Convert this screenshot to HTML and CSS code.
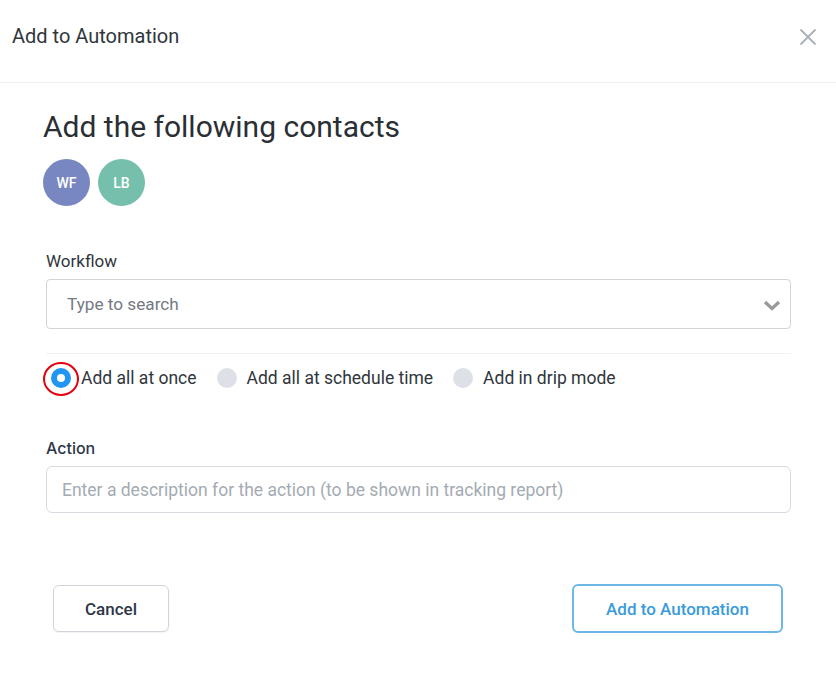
FILE: index.html
```html
<!DOCTYPE html>
<html lang="en">
<head>
    <meta charset="UTF-8">
    <meta name="viewport" content="width=device-width, initial-scale=1.0">
    <title>Add to Automation</title>
    <link rel="stylesheet" href="styles.css">
</head>
<body>
    <div class="modal">
        <div class="modal-header">
            <span class="modal-title">Add to Automation</span>
            <button class="close-button" aria-label="Close">
                <svg width="18" height="18" viewBox="0 0 18 18">
                    <path d="M1.5 1.5 L16.5 16.5 M16.5 1.5 L1.5 16.5" stroke="#a9b0b6" stroke-width="1.8" fill="none"/>
                </svg>
            </button>
        </div>

        <div class="modal-body">
            <h2 class="contacts-title">Add the following contacts</h2>
            <div class="avatars">
                <div class="avatar avatar-wf">WF</div>
                <div class="avatar avatar-lb">LB</div>
            </div>

            <label class="field-label">Workflow</label>
            <div class="select-box">
                <span class="select-placeholder">Type to search</span>
                <svg class="chevron" width="18" height="11" viewBox="0 0 18 11">
                    <path d="M2 2 L9 8.5 L16 2" stroke="#9a9a9a" stroke-width="3.2" fill="none"/>
                </svg>
            </div>

            <div class="divider"></div>

            <div class="radio-row">
                <label class="radio-option">
                    <span class="radio radio-checked"></span>
                    <span class="highlight"></span>
                    <span class="radio-text">Add all at once</span>
                </label>
                <label class="radio-option">
                    <span class="radio"></span>
                    <span class="radio-text">Add all at schedule time</span>
                </label>
                <label class="radio-option">
                    <span class="radio"></span>
                    <span class="radio-text">Add in drip mode</span>
                </label>
            </div>

            <label class="field-label action-label">Action</label>
            <input class="text-input" type="text" placeholder="Enter a description for the action (to be shown in tracking report)">
        </div>

        <div class="modal-footer">
            <button class="btn btn-cancel">Cancel</button>
            <button class="btn btn-primary">Add to Automation</button>
        </div>
    </div>
</body>
</html>
```

FILE: styles.css
```css
body {
    margin: 0;
    background-color: #fff;
    font-family: Roboto, "Liberation Sans", sans-serif;
    color: #2f353b;
}
.modal {
    width: 836px;
}
.modal-header {
    display: flex;
    align-items: flex-start;
    justify-content: space-between;
    height: 83px;
    box-sizing: border-box;
    padding: 25px 19px 0 12px;
    border-bottom: 1px solid #eef2f6;
}
.modal-title {
    font-size: 20px;
    line-height: 22px;
    color: #30363c;
}
.close-button {
    background: none;
    border: none;
    padding: 0;
    width: 18px;
    height: 18px;
    margin-top: 3px;
    cursor: pointer;
}
.modal-body {
    padding: 27px 45px 0 46px;
}
.contacts-title {
    font-size: 30px;
    font-weight: 400;
    line-height: 34px;
    margin: 0 0 15px -3px;
    color: #2a2f35;
}
.avatars {
    display: flex;
    gap: 8px;
    margin-left: -3px;
}
.avatar {
    width: 47px;
    height: 47px;
    border-radius: 50%;
    display: flex;
    align-items: center;
    justify-content: center;
    color: #fff;
    font-size: 14px;
    font-weight: 500;
}
.avatar-wf {
    background-color: #7887c1;
}
.avatar-lb {
    background-color: #75bfac;
}
.field-label {
    display: block;
    font-size: 17px;
    line-height: 20px;
    margin: 45px 0 8px;
    color: #30363c;
}
.select-box {
    display: flex;
    align-items: center;
    justify-content: space-between;
    height: 48px;
    padding: 0 9px 0 20px;
    border: 1px solid #d2d4d8;
    border-radius: 4px;
}
.select-placeholder {
    font-size: 17.2px;
    color: #737a82;
}
.chevron {
    margin-top: 2px;
}
.divider {
    height: 1px;
    background-color: #eef3f6;
    margin: 24px 0 12px;
}
.radio-row {
    display: flex;
    align-items: center;
    gap: 20px;
    height: 24px;
}
.radio-option {
    position: relative;
    display: flex;
    align-items: center;
    gap: 10px;
    height: 24px;
    font-size: 17.5px;
    color: #30363c;
}
.radio {
    width: 20px;
    height: 20px;
    border-radius: 50%;
    background-color: #dde0e6;
}
.radio-checked {
    box-sizing: border-box;
    background-color: #fff;
    border: 6px solid #2195f2;
    margin-left: 5px;
}
.highlight {
    position: absolute;
    left: -3px;
    top: -4px;
    box-sizing: border-box;
    width: 36px;
    height: 34px;
    border: 2px solid #e3000f;
    border-radius: 50%;
}
.action-label {
    font-family: Inter, Roboto, sans-serif;
    font-weight: 500;
    font-size: 16px;
    color: #2d3748;
    margin-top: 48px;
}
.text-input {
    box-sizing: border-box;
    width: 100%;
    height: 47px;
    padding: 0 15px;
    border: 1px solid #d6dbe1;
    border-radius: 6px;
    font-family: Roboto, sans-serif;
    font-size: 17.5px;
    color: #30363c;
    outline: none;
}
.text-input::placeholder {
    color: #a4abb2;
}
.modal-footer {
    display: flex;
    align-items: center;
    justify-content: space-between;
    padding: 71px 53px 0 53px;
}
.btn {
    font-family: Roboto, sans-serif;
    font-size: 17px;
    font-weight: 500;
    background-color: #fff;
    cursor: pointer;
}
.btn-cancel {
    width: 116px;
    height: 47px;
    border: 1px solid #d3d3dc;
    border-radius: 6px;
    color: #2d3748;
    box-shadow: 0 1px 2px rgba(0, 0, 0, 0.06);
}
.btn-primary {
    width: 211px;
    height: 49px;
    border: 2px solid #6db7e6;
    border-radius: 6px;
    color: #3a9bdb;
}
```
